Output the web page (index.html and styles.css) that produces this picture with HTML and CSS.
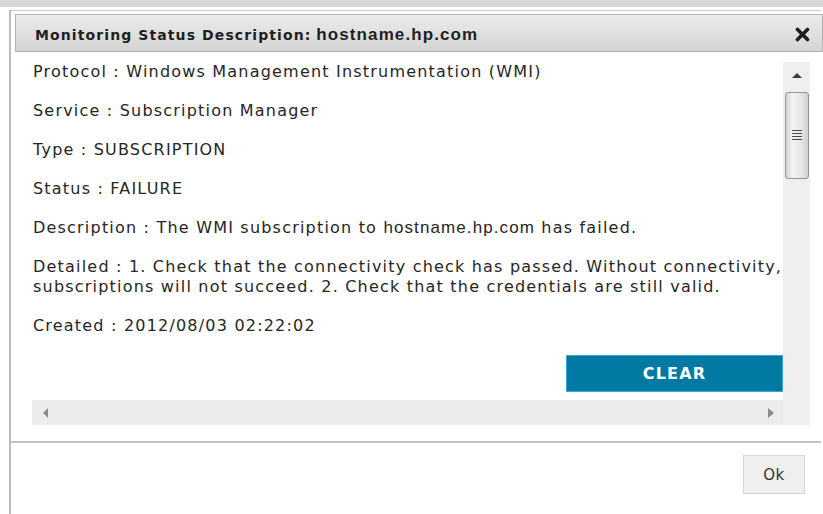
FILE: index.html
```html
<!DOCTYPE html>
<html lang="en">
<head>
<meta charset="utf-8">
<title>Monitoring Status Description</title>
<link rel="stylesheet" href="styles.css">
</head>
<body>
<div class="topbar"></div>
<div class="dialog">
  <div class="dialog-header">
    <h1 class="dialog-title"><span class="title-label">Monitoring Status Description:</span> <span class="title-host">hostname.hp.com</span></h1>
    <button class="close" aria-label="Close">
      <svg width="15" height="15" viewBox="0 0 15 15"><path d="M2.5 2.5 L12.5 12.5 M12.5 2.5 L2.5 12.5" stroke="#1e1e1e" stroke-width="3.6" stroke-linecap="round"/></svg>
    </button>
  </div>

  <div class="scroller">
    <div class="pane">
      <p>Protocol : Windows Management Instrumentation (WMI)</p>
      <p>Service : Subscription Manager</p>
      <p>Type : SUBSCRIPTION</p>
      <p>Status : FAILURE</p>
      <p>Description : The WMI subscription to <span class="host">hostname.hp.com</span> has failed.</p>
      <p>Detailed : 1. Check that the connectivity check has passed. Without connectivity, subscriptions will not succeed. 2. Check that the credentials are still valid.</p>
      <p>Created : 2012/08/03 02:22:02</p>
      <div class="actions"><button class="btn-clear">CLEAR</button></div>
    </div>
    <div class="vscroll">
      <span class="arrow arrow-up"></span>
      <div class="thumb"><span class="grip"></span></div>
    </div>
    <div class="hscroll">
      <span class="arrow arrow-left"></span>
      <span class="arrow arrow-right"></span>
    </div>
    <div class="corner"></div>
  </div>

  <div class="dialog-footer">
    <button class="btn-ok">Ok</button>
  </div>
</div>
</body>
</html>
```
FILE: styles.css
```css
html, body {
  margin: 0;
  padding: 0;
  background: #ffffff;
  overflow: hidden;
}

body {
  width: 823px;
  height: 514px;
  font-family: "DejaVu Sans", Verdana, sans-serif;
  color: #262626;
}

.topbar {
  height: 7px;
  background: #d8d8d8;
  margin-bottom: 3px;
}

.dialog {
  margin-left: 9px;
  width: 812px;
  height: 504px;
  border-left: 2px solid #bcbcbc;
  border-top: 1px solid #c9c9c9;
  display: flex;
  flex-direction: column;
  box-sizing: border-box;
}

/* title bar */
.dialog-header {
  margin: 3px -2px 0 4px;
  height: 38px;
  box-sizing: border-box;
  border: 1px solid #b3b3b3;
  background: linear-gradient(#ebebeb, #d4d4d4);
  display: flex;
  align-items: center;
  justify-content: space-between;
  padding: 3px 12px 0 19px;
}

.dialog-title {
  margin: 0;
  font-size: 14px;
  font-weight: bold;
  color: #1f1f1f;
  white-space: nowrap;
  line-height: 20px;
}

.title-label {
  letter-spacing: 1.1px;
}

.title-host {
  font-family: "Liberation Sans", Arial, sans-serif;
  font-size: 17px;
  letter-spacing: 1.1px;
}

.close {
  border: 0;
  background: none;
  padding: 0;
  width: 15px;
  height: 15px;
  display: block;
}

.close svg {
  display: block;
}

/* scrolling content with drawn scrollbars */
.scroller {
  margin: 10px 11px 0 21px;
  height: 363px;
  display: grid;
  grid-template-columns: 1fr 27px;
  grid-template-rows: 338px 25px;
}

.pane {
  background: #ffffff;
  padding-left: 1px;
  overflow: hidden;
  font-size: 16px;
  line-height: 20px;
  letter-spacing: 1.2px;
}

.pane p {
  margin: 0 0 19px;
}

.host {
  font-family: "Liberation Sans", Arial, sans-serif;
  font-size: 17px;
  letter-spacing: 1.1px;
}

.actions {
  display: flex;
  justify-content: flex-end;
}

.btn-clear {
  width: 217px;
  height: 37px;
  border: 1px solid #41a3d6;
  background: #0279a3;
  color: #ffffff;
  font-family: "DejaVu Sans", Verdana, sans-serif;
  font-weight: bold;
  font-size: 16px;
  letter-spacing: 1.2px;
  padding: 0;
}

.vscroll {
  background: #efefef;
  display: flex;
  flex-direction: column;
  align-items: center;
  padding-top: 11px;
}

.hscroll {
  background: #ececec;
  display: flex;
  align-items: center;
  justify-content: space-between;
  padding: 0 9px 0 11px;
}

.corner {
  background: #efefef;
}

.arrow {
  width: 0;
  height: 0;
  display: block;
}

.arrow-up {
  border-left: 5px solid transparent;
  border-right: 5px solid transparent;
  border-bottom: 5px solid #3c3c3c;
}

.arrow-left {
  border-top: 5px solid transparent;
  border-bottom: 5px solid transparent;
  border-right: 5px solid #8a8a8a;
}

.arrow-right {
  border-top: 5px solid transparent;
  border-bottom: 5px solid transparent;
  border-left: 6px solid #8a8a8a;
}

.thumb {
  margin-top: 14px;
  width: 24px;
  height: 87px;
  box-sizing: border-box;
  border: 1px solid #979797;
  border-radius: 3px;
  background: linear-gradient(90deg, #d2d2d2, #f4f4f4 30%, #e6e6e6 70%, #cfcfcf);
  display: flex;
  align-items: center;
  justify-content: center;
}

.grip {
  width: 10px;
  height: 11px;
  background: repeating-linear-gradient(#4a4a4a 0 1px, transparent 1px 3px);
}

/* footer */
.dialog-footer {
  margin-top: 16px;
  border-top: 2px solid #c2c2c2;
  display: flex;
  justify-content: flex-end;
  padding: 12px 16px 0 0;
}

.btn-ok {
  width: 62px;
  height: 39px;
  border: 1px solid #d6d6d6;
  background: #efefef;
  color: #333333;
  font-family: "DejaVu Sans", Tahoma, sans-serif;
  font-size: 15px;
  letter-spacing: 0.5px;
  padding: 0;
}
```
